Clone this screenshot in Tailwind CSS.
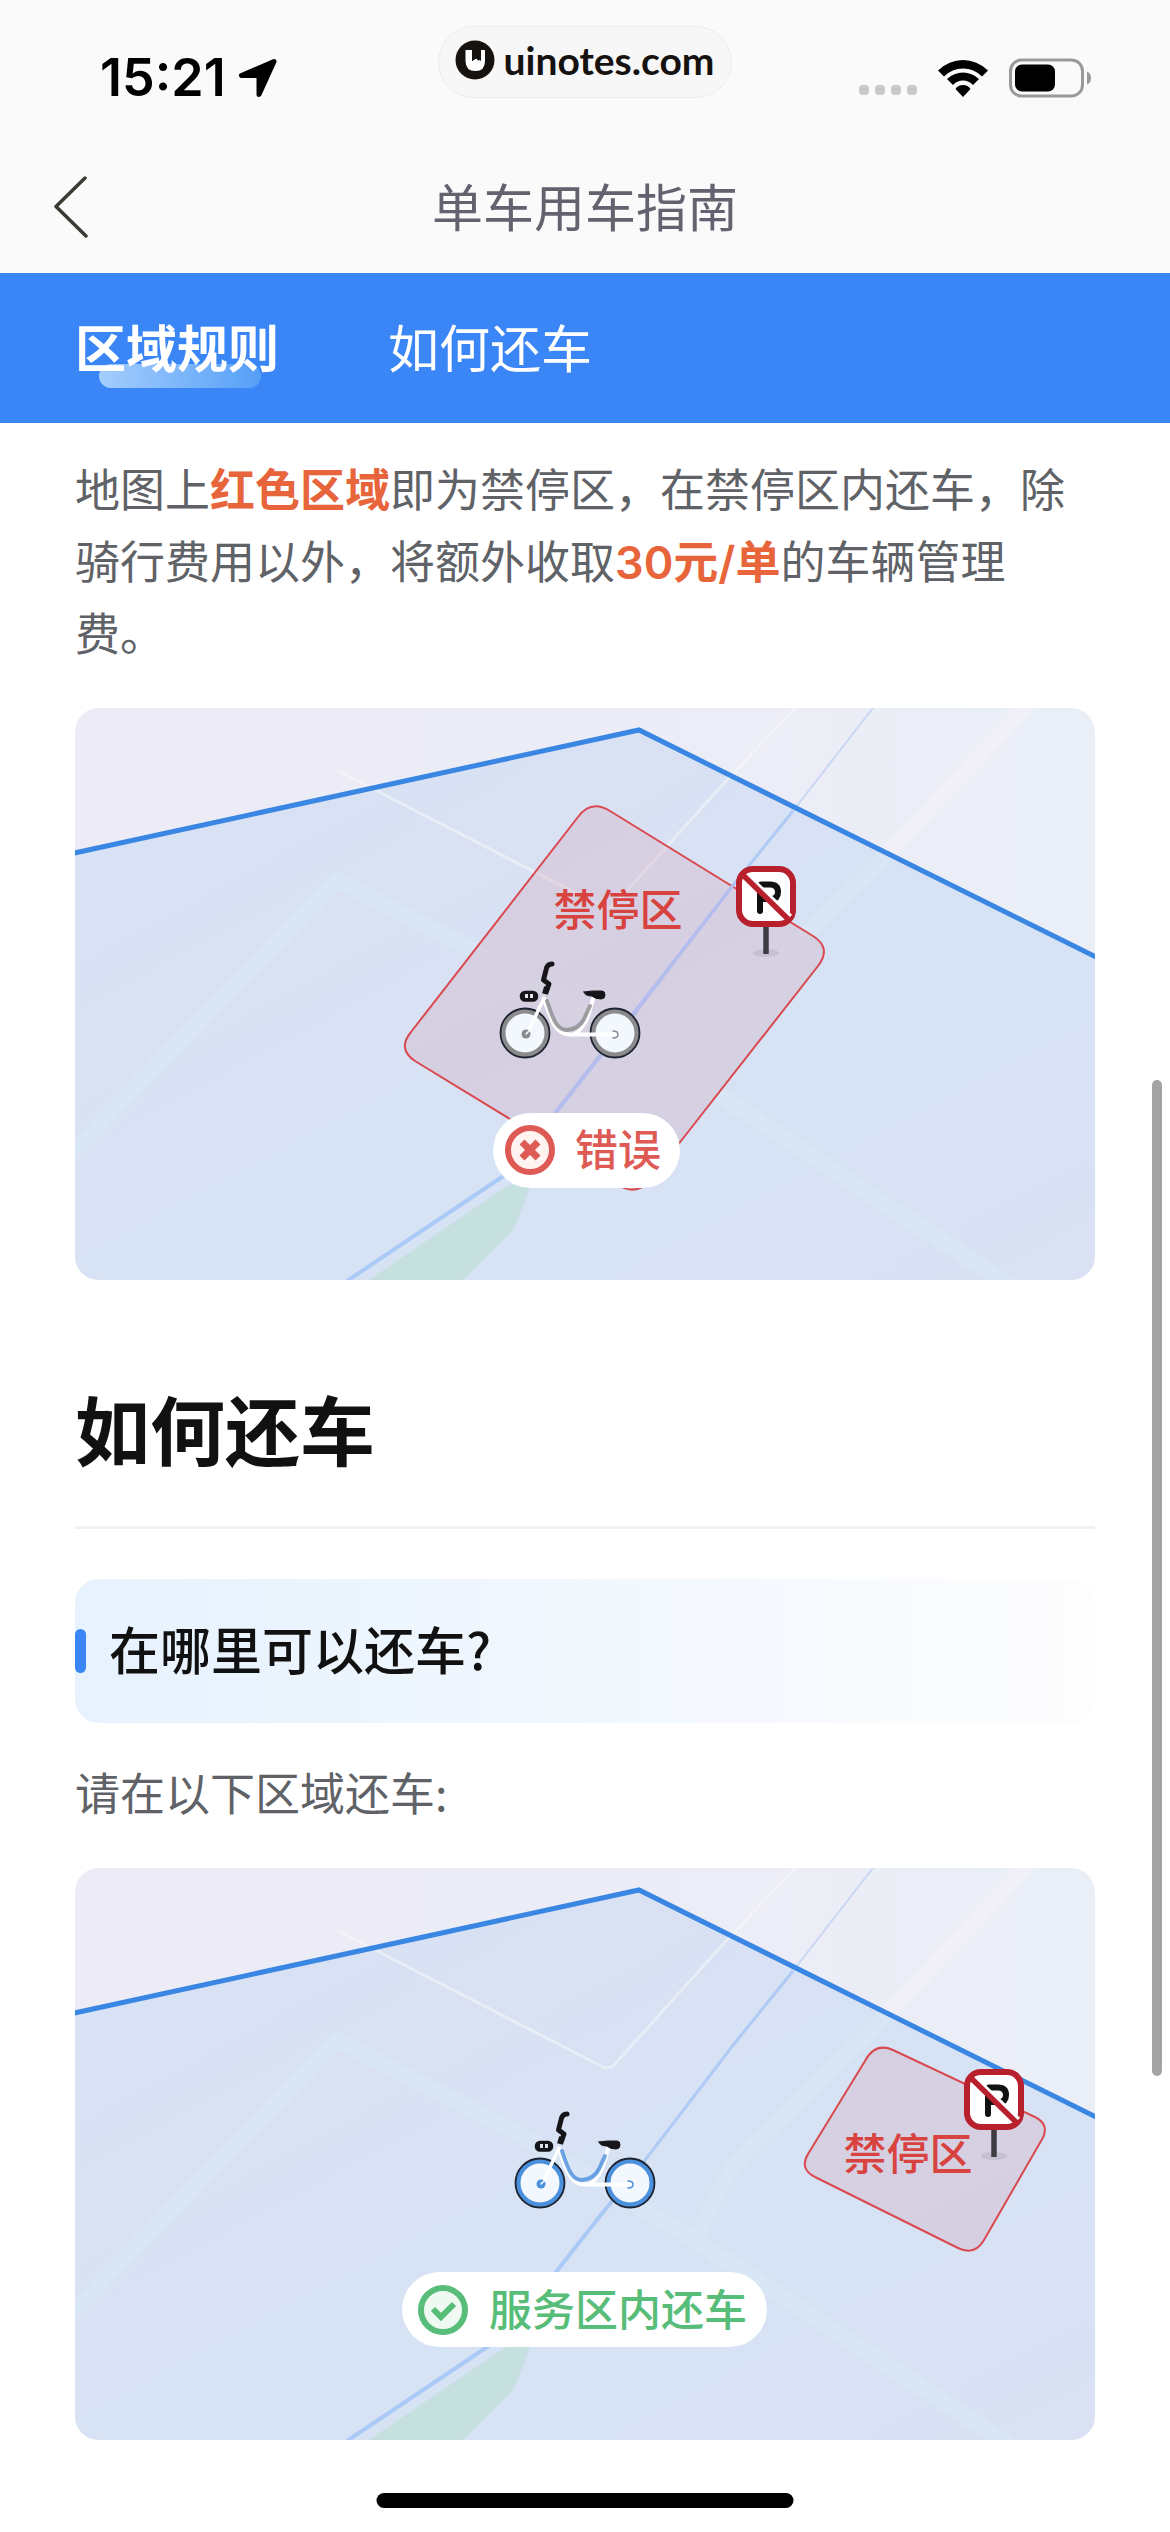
<!DOCTYPE html>
<html lang="zh-CN">
<head>
    <meta charset="UTF-8">
    <meta name="viewport" content="width=device-width, initial-scale=1.0">
    <title>单车用车指南</title>
    <script src="https://cdn.jsdelivr.net/npm/@tailwindcss/browser@4"></script>
</head>

<body class="bg-white font-['Noto_Sans_CJK_SC',sans-serif] text-[#5f6266]">

    <!-- Shared drawings -->
    <svg class="absolute w-0 h-0" aria-hidden="true">
        <defs>
            <linearGradient id="outside" x1="0" x2="1">
                <stop offset="0" stop-color="#ecebf6" />
                <stop offset="0.7" stop-color="#ecedf6" />
                <stop offset="1" stop-color="#eaeff7" />
            </linearGradient>
            <linearGradient id="inside" x1="0" y1="0" x2="1" y2="1">
                <stop offset="0" stop-color="#d6e3f5" />
                <stop offset="0.3" stop-color="#d9e1f3" />
                <stop offset="0.6" stop-color="#d6e3f5" />
                <stop offset="1" stop-color="#d9e1f3" />
            </linearGradient>
            <clipPath id="service"><path d="M0 145L564 22L1020 249V572H0Z" /></clipPath>

            <g id="roads" fill="none" stroke-linejoin="round">
                <path d="M-10 452L262 172L448 268L616 370L700 423L935 578" stroke-width="16" />
                <path d="M621 370L641 329Q655 300 675 280L794 165L834 123L955 -5" stroke-width="15" />
            </g>

            <g id="map">
                <rect width="1020" height="572" fill="url(#outside)" />
                <use href="#roads" stroke="#f1f0f8" />
                <path d="M0 145L564 22L1020 249V572H0Z" fill="url(#inside)" />
                <use href="#roads" stroke="#d9e6f5" clip-path="url(#service)" />
                <path d="M263 63L530 200L537 199L652 72L722 -2" fill="none" stroke="#f8f9fa" stroke-width="3" opacity="0.5" />
                <path d="M294 572L432 478L455 474Q455 484 438 522L388 572Z" fill="#c5e0df" />
                <path d="M272 573L427 469Q445 457 481 404L525 348L561 304" fill="none" stroke="#abc9f6" stroke-width="4" />
                <path d="M561 304L659 176L718 103" fill="none" stroke="#b0caf6" stroke-width="3" />
                <path d="M718 103L798 0" fill="none" stroke="#c9d7f2" stroke-width="2" />
                <path d="M-5 146L564 22L1025 251" fill="none" stroke="#3a86e3" stroke-width="5" />
            </g>

            <g id="bike" fill="none" stroke-linecap="round" stroke-linejoin="round">
                <circle r="22" fill="#f3f8fe" stroke="currentColor" stroke-width="5" />
                <circle r="24.5" stroke="#1d2430" stroke-width="1.8" />
                <circle cx="90" r="22" fill="#f3f8fe" stroke="currentColor" stroke-width="5" />
                <circle cx="90" r="24.5" stroke="#1d2430" stroke-width="1.8" />
                <path d="M19 -35L4 -3" stroke="#fff" stroke-width="3.5" />
                <path d="M19 -34C26 -14 30 1 44 1.500H90M68 -34L64 -20Q60 -6 50 1" stroke="#fff" stroke-width="4" />
                <path d="M22 -32C29 -10 33 -3 42 -3Q54 -4 59 -14L65 -27" stroke="currentColor" stroke-width="4" opacity="0.8" />
                <circle cx="1" cy="1" r="4.500" fill="currentColor" />
                <path d="M1 1L4 -2" stroke="#fff" stroke-width="1.500" />
                <path d="M88 -2Q93 -2 93 1.500Q93 5 88 5" stroke="currentColor" stroke-width="1.500" />
                <path d="M27 -69Q22 -69 21 -63L18.500 -53L24 -49L21.500 -42" stroke="#15151a" stroke-width="5" />
                <path d="M22 -46L20 -39" stroke="#15151a" stroke-width="6" stroke-linecap="butt" />
                <rect x="-4" y="-41" width="16" height="8.500" rx="4" fill="#15151a" stroke="#15151a" stroke-width="2.500" />
                <path d="M1.500 -39V-35M6.500 -39V-35" stroke="#dfe3ea" stroke-width="3" stroke-linecap="butt" />
                <path d="M59 -41Q66 -42.500 77 -42Q80 -42 80 -38Q80 -34 76 -34Q70 -34 67 -37Q60 -37 59 -41Z" fill="#15151a" stroke="#15151a" />
            </g>

            <g id="sign">
                <ellipse cx="30" cy="87" rx="13" ry="4" fill="#555566" opacity="0.12" />
                <path d="M30 60V88" stroke="#3c3c42" stroke-width="5.500" />
                <rect x="3" y="3" width="54" height="55" rx="14" fill="#fff" stroke="#b7202c" stroke-width="6" />
                <path d="M24 25V45M24 33H35Q42 33 42 26Q42 18.500 34 18.500H25" fill="none" stroke="#111" stroke-width="6" stroke-linecap="round" />
                <path d="M10 9L54 51" stroke="#fff" stroke-width="6" />
                <path d="M7 9L53 54" stroke="#b7202c" stroke-width="5.500" />
            </g>
        </defs>
    </svg>

    <header class="bg-[#fafafa]">
        <!-- Status bar -->
        <div class="grid grid-cols-[1fr_auto_1fr] items-center h-[124px] text-black">
            <div class="flex items-center gap-3 pl-[100px] pt-8">
                <span class="font-['Inter',sans-serif] text-[52px] leading-[60px] font-semibold">15:21</span>
                <svg class="w-10 h-10" viewBox="0 0 40 40" aria-hidden="true">
                    <path d="M36 3.500L3.500 17.500H21V36.500Z" fill="#000" stroke="#000" stroke-width="5" stroke-linejoin="round" />
                </svg>
            </div>
            <div class="flex items-center gap-2 h-[72px] px-4 pb-1 rounded-full bg-[#f7f7f7] border border-[#ededed]">
                <svg class="w-10 h-10" viewBox="0 0 40 40" aria-hidden="true">
                    <circle cx="20" cy="20" r="19.500" fill="#151210" />
                    <path d="M10.500 10H17V20Q17 21.500 18 20.500L21 18.500L24 21V10H30V21Q30 31 20.500 31Q10.500 31 10.500 21Z" fill="#fff" />
                    <path d="M17 10H26V21L21.500 18L17 21Z" fill="#151210" />
                </svg>
                <span class="font-['Lato',sans-serif] text-[39px] leading-[48px] font-bold text-[#151210]">uinotes.com</span>
            </div>
            <div class="flex items-center justify-end pr-[78px] pt-8">
                <div class="flex gap-1.5 mt-6 mr-5">
                    <span class="w-2.5 h-2.5 rounded-sm bg-[#c8c8c8]"></span>
                    <span class="w-2.5 h-2.5 rounded-sm bg-[#c8c8c8]"></span>
                    <span class="w-2.5 h-2.5 rounded-sm bg-[#c8c8c8]"></span>
                    <span class="w-2.5 h-2.5 rounded-sm bg-[#c8c8c8]"></span>
                </div>
                <svg class="w-[52px] h-[38px] mr-5" viewBox="0 0 52 38" aria-hidden="true">
                    <path d="M1 11.500Q12 1 26 1Q40 1 51 11.500L45 17.500Q37 9.500 26 9.500Q15 9.500 7 17.500Z" />
                    <path d="M10 20Q17 13.500 26 13.500Q35 13.500 42 20L36 26Q32 21.500 26 21.500Q20 21.500 16 26Z" />
                    <path d="M18.500 30Q21 26 26 26Q31 26 33.500 30L26 38Z" />
                </svg>
                <svg class="w-[83px] h-10" viewBox="0 0 83 40" aria-hidden="true">
                    <rect x="1.500" y="2" width="72" height="36" rx="11" fill="none" stroke="#999" stroke-width="3" />
                    <rect x="6" y="6.500" width="40" height="27" rx="7" />
                    <path d="M78 13.500Q82 15 82 20Q82 25 78 26.500Z" fill="#999" />
                </svg>
            </div>
        </div>

        <!-- Title bar -->
        <div class="grid grid-cols-[1fr_auto_1fr] items-center h-[132px] mt-[17px]">
            <button type="button" aria-label="返回" class="w-24 pl-[52px]">
                <svg class="w-9 h-16" viewBox="0 0 36 64" fill="none" stroke="#3b3a32" stroke-width="3.500" stroke-linecap="round" stroke-linejoin="round">
                    <path d="M33 3L4 31.500L34 61" />
                </svg>
            </button>
            <h1 class="pb-1 text-[51px] leading-[72px] text-[#63626e]">单车用车指南</h1>
        </div>
    </header>

    <!-- Tabs -->
    <nav class="flex items-center gap-[109px] h-[150px] px-[75px] pb-1 bg-[#3a86f6] text-[51px] leading-[72px] text-white">
        <a href="#rules" class="relative font-bold">
            <span class="absolute left-6 bottom-[-6px] w-[162px] h-6 rounded-full bg-linear-to-r from-[#a3cdfc] to-[#559ff7]"></span>
            <span class="relative">区域规则</span>
        </a>
        <a href="#return">如何还车</a>
    </nav>

    <main class="px-[75px] pb-[90px]">
        <section id="rules" class="pt-[29px]">
            <p class="pr-4 text-[45px] leading-[72px]">地图上<strong class="text-[#e8643b]">红色区域</strong>即为禁停区，在禁停区内还车，除骑行费用以外，将额外收取<strong class="font-['Inter','Noto_Sans_CJK_SC',sans-serif] leading-[60px] font-semibold text-[#e8643b]">30元/单</strong>的车辆管理费。</p>

            <svg class="w-full mt-10 rounded-3xl" viewBox="0 0 1020 572" role="img" aria-label="禁停区内还车示意图">
                <use href="#map" />
                <path d="M503 109Q516 91 535 103L738 228Q757 240 743 258L577 470Q563 489 543 477L340 353Q322 341 336 324Z" fill="#d296aa" fill-opacity="0.25" stroke="#d9494f" stroke-width="2" />
                <path d="M481 404L525 348L659 176" fill="none" stroke="#b3bdf0" stroke-width="3" />
                <use href="#sign" x="661" y="158" />
                <use href="#bike" x="450" y="325" class="text-[#8b8b8d]" />
                <text x="543" y="218" text-anchor="middle" class="text-[43px] font-medium fill-[#d8423f]">禁停区</text>
                <rect x="418" y="405" width="187" height="75" rx="37.500" fill="#fff" />
                <circle cx="455" cy="442" r="22" fill="#fff3f1" stroke="#de5a55" stroke-width="6" />
                <path d="M447 434L463 450M463 434L447 450" stroke="#de5a55" stroke-width="7" />
                <text x="543" y="458" text-anchor="middle" class="text-[43px] font-medium fill-[#de5a55]">错误</text>
            </svg>
        </section>

        <section id="return" class="pt-[88px]">
            <h2 class="pb-[38px] border-b-3 border-[#f0f1f1] text-[75px] leading-[120px] font-bold text-[#111]">如何还车</h2>

            <h3 class="flex items-center gap-[23px] h-36 mt-[50px] rounded-3xl bg-linear-to-r from-[#e6f2fe] to-[#fdfdfe] text-[51px] leading-[72px] font-medium text-[#111]">
                <span class="w-[11px] h-11 rounded-full bg-[#3a86f6]"></span>
                <span class="pb-1.5">在哪里可以还车?</span>
            </h3>

            <p class="mt-[33px] text-[45px] leading-[72px]">请在以下区域还车:</p>

            <svg class="w-full mt-10 rounded-3xl" viewBox="0 0 1020 572" role="img" aria-label="服务区内还车示意图">
                <use href="#map" />
                <path d="M790 193Q800 174 818 182L960 249Q976 257 966 273L909 372Q900 388 883 380L740 309Q724 301 733 286Z" fill="#d296aa" fill-opacity="0.25" stroke="#d9494f" stroke-width="2" />
                <use href="#sign" x="889" y="201" />
                <use href="#bike" x="465" y="315" class="text-[#4b90dc]" />
                <text x="833" y="302" text-anchor="middle" class="text-[43px] font-medium fill-[#d8423f]">禁停区</text>
                <rect x="327" y="404" width="365" height="75" rx="37.500" fill="#fff" />
                <circle cx="368" cy="442" r="22" fill="#eefaf1" stroke="#57bd78" stroke-width="6" />
                <path d="M358 441L366 449L379 436" fill="none" stroke="#57bd78" stroke-width="6" />
                <text x="543" y="458" text-anchor="middle" class="text-[43px] font-medium fill-[#57bd78]">服务区内还车</text>
            </svg>
        </section>
    </main>

    <!-- Scroll thumb and home indicator -->
    <div class="fixed right-2 top-[1080px] w-2.5 h-[996px] rounded-full bg-[#a3a3a3]"></div>
    <div class="fixed bottom-6 left-1/2 -translate-x-1/2 w-[417px] h-[15px] rounded-full bg-black"></div>

</body>
</html>
